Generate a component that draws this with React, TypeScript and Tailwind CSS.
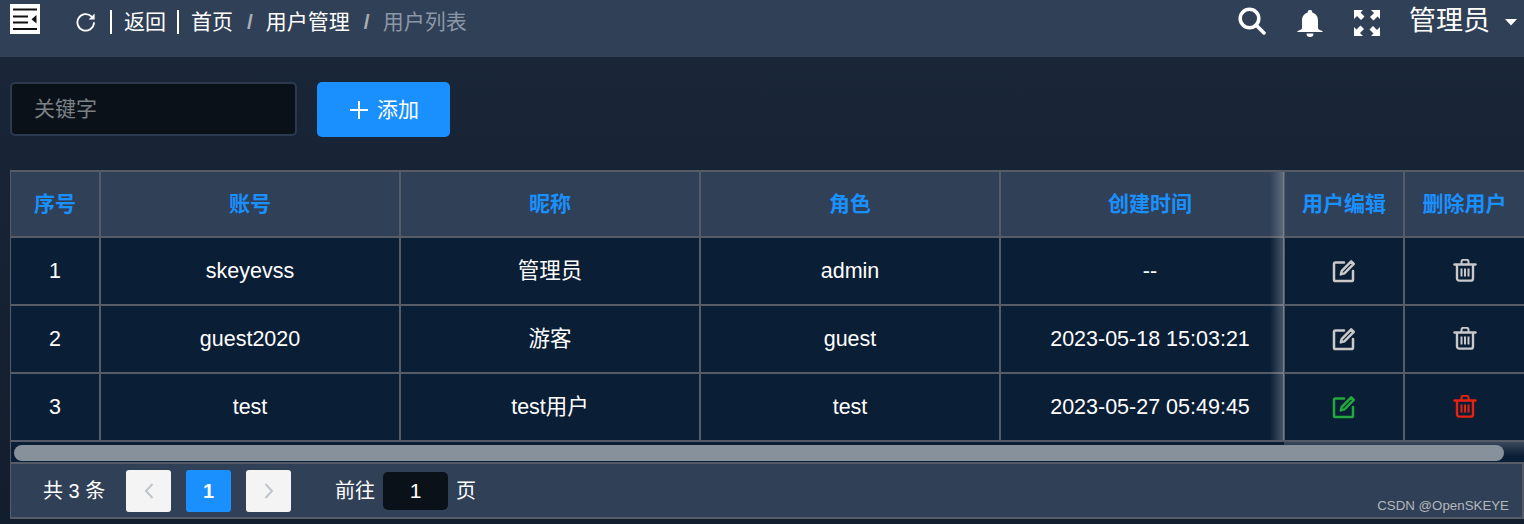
import React from "react";

const font = { fontFamily: '"Liberation Sans", "Noto Sans CJK SC", sans-serif' };

function EditIcon({ c }: { c: string }) {
  return (
    <svg width="24" height="24" viewBox="0 0 24 24" fill="none">
      <path d="M12 3.500H3.600a1.600 1.600 0 0 0-1.600 1.600v15.300A1.600 1.600 0 0 0 3.600 22h15.800a1.600 1.600 0 0 0 1.600-1.600V12" stroke={c} strokeWidth="2.500" strokeLinecap="round" />
      <path d="M19.200 2.400l2.600 2.500-9.400 9.500-3.600 1 1-3.500z" stroke={c} strokeWidth="2.500" strokeLinejoin="round" />
    </svg>
  );
}

function TrashIcon({ c }: { c: string }) {
  return (
    <svg width="24" height="24" viewBox="0 1 24 24" fill="none">
      <path d="M1.500 6.500h21" stroke={c} strokeWidth="2.400" strokeLinecap="round" />
      <path d="M8.500 6V3.800a2 2 0 0 1 2-2h3a2 2 0 0 1 2 2V6" stroke={c} strokeWidth="2" />
      <path d="M4 7v13.400a2.200 2.200 0 0 0 2.200 2.200h11.600a2.200 2.200 0 0 0 2.200-2.200V7" stroke={c} strokeWidth="2.400" />
      <path d="M8.500 10.500v8M12 10.500v8M15.500 10.500v8" stroke={c} strokeWidth="2" />
    </svg>
  );
}

const cols = "grid grid-cols-[90px_300px_300px_300px_284px_120px_119px]";
const cell = "flex items-center justify-center border-r-2 border-[#555b67] last:border-r-0";

const rows = [
  ["1", "skeyevss", "管理员", "admin", "--", "#c9c9c9", "#c9c9c9"],
  ["2", "guest2020", "游客", "guest", "2023-05-18 15:03:21", "#c9c9c9", "#c9c9c9"],
  ["3", "test", "test用户", "test", "2023-05-27 05:49:45", "#22a93e", "#e8220f"],
];

const heads = ["序号", "账号", "昵称", "角色", "创建时间", "用户编辑", "删除用户"];

export default function App() {
  return (
    <div style={font} className="relative flex h-[524px] w-[1524px] flex-col overflow-hidden bg-gradient-to-b from-[#1a2739] to-[#121e2e] text-white">
      <header className="flex h-[57px] shrink-0 items-start bg-[#304056]">
        <div className="ml-[10px] mt-[4px] flex h-[30px] w-[30px] items-center justify-center bg-white">
          <svg width="24" height="24" viewBox="0 0 24 24">
            <path d="M0 1.500h24v2H0zM0 8.500h15v2H0zM0 14.500h15v2H0zM0 21h24v2H0z" fill="#111" />
            <path d="M23.500 8v8.500l-5-4.250z" fill="#111" />
          </svg>
        </div>
        <div className="ml-[36px] mt-[10px] flex h-6 items-center text-[21px] leading-6">
          <svg width="20" height="20" viewBox="0 0 20 20" fill="none">
            <path d="M18 11a8.300 8.300 0 1 1-2.600-6.700" stroke="#fff" strokeWidth="1.800" strokeLinecap="round" />
            <path d="M18.600 1.500v6h-6z" fill="#fff" />
          </svg>
          <span className="ml-[14px] h-[24px] w-[2px] bg-white" />
          <span className="ml-[12px]">返回</span>
          <span className="ml-[11px] h-[24px] w-[2px] bg-white" />
          <span className="ml-[12px]">首页</span>
          <span className="ml-[14px] font-bold text-[#a6adb8]">/</span>
          <span className="ml-[13px]">用户管理</span>
          <span className="ml-[14px] font-bold text-[#a6adb8]">/</span>
          <span className="ml-[13px] text-[#8b97a6]">用户列表</span>
        </div>
        <div className="ml-auto mt-[7px] flex items-start">
          <svg width="28" height="28" viewBox="0 0 28 28" fill="none" stroke="#fff" strokeWidth="3.500">
            <circle cx="11.500" cy="11.500" r="9.300" />
            <path d="M18 18l8 8" strokeLinecap="round" />
          </svg>
          <svg className="ml-[31px] mt-[2px]" width="26" height="28" viewBox="0 0 26 28" fill="#fff">
            <path d="M13 1a2.200 2.200 0 0 1 2.200 2.400C19 4.400 21 7.600 21 11.500V19c0 1 1 2 4.500 3v1H.5v-1C4 21 5 20 5 19v-7.500C5 7.600 7 4.400 10.800 3.400A2.200 2.200 0 0 1 13 1z" />
            <path d="M9.500 24.500h7a3.500 3.500 0 0 1-7 0z" />
          </svg>
          <svg className="ml-[30px] mt-[2px]" width="28" height="28" viewBox="0 0 28 28" fill="#fff">
            <path d="M1 1h9L7.500 3.500l4 4-3.500 3.500-4-4L1 10zM27 1v9l-2.500-2.500-4 4L17 8l4-4L18 1zM1 27v-9l2.500 2.500 4-4L11 20l-4 4 3 3zM27 27h-9l2.500-2.500-4-4L20 17l4 4 3-3z" />
          </svg>
          <span className="ml-[28px] w-[82px] text-[27px] leading-[28px]">管理员</span>
          <svg className="ml-[14px] mr-[7px] mt-[11px]" width="12" height="8" viewBox="0 0 12 8" fill="#fff"><path d="M0 1h12L6 7.500z" /></svg>
        </div>
      </header>

      <div className="mt-[25px] flex items-start pl-[10px]">
        <div className="flex h-[54px] w-[287px] items-center rounded-[5px] border-2 border-[#2b3a4e] bg-[#0a1119] pl-[22px] text-[21px] text-[#7c8186]">关键字</div>
        <button className="ml-[20px] flex h-[55px] w-[133px] items-center gap-[9px] rounded-[5px] bg-[#1a90ff] pl-[33px] text-[21px]">
          <svg width="18" height="18" viewBox="0 0 18 18" stroke="#fff" strokeWidth="2"><path d="M9 0v18M0 9h18" /></svg>
          添加
        </button>
      </div>

      <section className="ml-[10px] mt-[33px] flex w-[1514px] flex-col border-l border-[#555b67]">
        <div className={`${cols} h-[68px] border-y-2 border-[#555b67] bg-[#304056] text-[21px] font-bold text-[#1a90ff]`}>
          {heads.map((h, i) => (
            <div key={h} className={`${cell} ${i === 4 ? "pl-[16px]" : ""}`}>{h}</div>
          ))}
        </div>
        {rows.map((r) => (
          <div key={r[0]} className={`${cols} h-[68px] border-b-2 border-[#555b67] bg-[#0a1e36] text-[21.5px]`}>
            {r.slice(0, 5).map((t, i) => (
              <div key={i} className={`${cell} ${i === 4 ? "pl-[16px]" : ""}`}>{t}</div>
            ))}
            <div className={cell}><EditIcon c={r[5]} /></div>
            <div className={cell}><TrashIcon c={r[6]} /></div>
          </div>
        ))}
        <div className="relative flex h-[22px] items-start border-b-2 border-[#555b67] bg-[#0a1e36] pl-[3px] pt-[3px]">
          <div className="absolute right-0 top-0 h-[14px] w-[240px] bg-gradient-to-b from-[#3a485c] to-transparent" />
          <div className="relative h-[16px] w-[1490px] rounded-full bg-[#87919c]" />
        </div>
        <div className="flex h-[55px] items-center border-b-2 border-r-2 border-[#555b67] bg-[#304056] pt-px text-[20px]">
          <span className="ml-[32px] w-[83px]">共 3 条</span>
          <div className="flex h-[42px] w-[45px] items-center justify-center rounded-[3px] bg-[#f4f4f5]">
            <svg width="10" height="16" viewBox="0 0 10 16" fill="none" stroke="#c0c4cc" strokeWidth="2"><path d="M8.500 1L2 8l6.500 7" /></svg>
          </div>
          <div className="ml-[15px] flex h-[42px] w-[45px] items-center justify-center rounded-[3px] bg-[#1a90ff] font-bold">1</div>
          <div className="ml-[15px] flex h-[42px] w-[45px] items-center justify-center rounded-[3px] bg-[#f4f4f5]">
            <svg width="10" height="16" viewBox="0 0 10 16" fill="none" stroke="#c0c4cc" strokeWidth="2"><path d="M1.500 1L8 8l-6.500 7" /></svg>
          </div>
          <span className="ml-[44px]">前往</span>
          <div className="ml-[8px] flex h-[38px] w-[65px] items-center justify-center rounded-[5px] bg-[#0a1119] text-[21px]">1</div>
          <span className="ml-[8px]">页</span>
        </div>
      </section>

      <div className="pointer-events-none absolute left-[1270px] top-[172px] h-[268px] w-[14px] bg-gradient-to-r from-transparent to-[#aab2bc]/40" />
      <span className="absolute bottom-[10px] right-[15px] text-[13.3px] leading-4 text-[#b4b8bd]">CSDN @OpenSKEYE</span>
    </div>
  );
}
